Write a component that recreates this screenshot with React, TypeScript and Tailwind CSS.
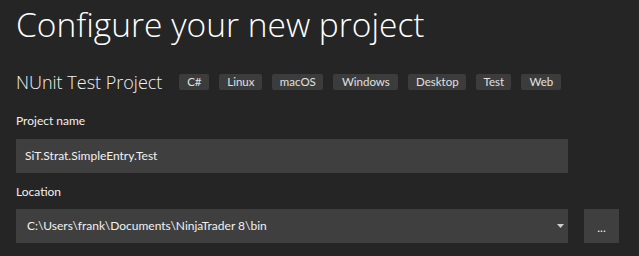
import React from 'react'

const tags = [
  { label: 'C#', width: 'w-[30px]' },
  { label: 'Linux', width: 'w-[43px]' },
  { label: 'macOS', width: 'w-[51px]' },
  { label: 'Windows', width: 'w-[65px]' },
  { label: 'Desktop', width: 'w-[58px]' },
  { label: 'Test', width: 'w-[35px]' },
  { label: 'Web', width: 'w-[40px]' },
]

const App = () => {
  return (
    <div
      className="w-[639px] h-[256px] bg-[#252526] text-[#f1f1f1] pl-[16px] overflow-hidden"
      style={{ fontFamily: 'Lato, "Open Sans", sans-serif' }}
    >
      <h1
        className="pt-[4px] text-[33.5px] leading-[40px] font-light text-white whitespace-nowrap"
        style={{ fontFamily: '"Open Sans", sans-serif' }}
      >
        Configure your new project
      </h1>

      <div className="mt-[26px] h-[24px] flex items-center">
        <span
          className="text-[18px] leading-[24px] font-light text-[#f1f1f1] mr-[17px] whitespace-nowrap"
          style={{ fontFamily: '"Open Sans", sans-serif' }}
        >
          NUnit Test Project
        </span>
        <div className="flex gap-[10px]">
          {tags.map((tag) => (
            <span
              key={tag.label}
              className={`${tag.width} h-[16px] flex items-center justify-center rounded-[2px] bg-[#3c3c3c] text-[11.5px] leading-[16px] text-[#e0e0e0] whitespace-nowrap`}
            >
              {tag.label}
            </span>
          ))}
        </div>
      </div>

      <p className="mt-[19px] text-[12px] leading-[16px] text-[#f1f1f1]">Project name</p>
      <div className="mt-[10px] w-[552px] h-[34px] bg-[#3f3f3f] flex items-center pl-[9px]">
        <span className="text-[12px] leading-[16px] text-[#f1f1f1]">SiT.Strat.SimpleEntry.Test</span>
      </div>

      <p className="mt-[11px] text-[12px] leading-[16px] text-[#f1f1f1]">Location</p>
      <div className="mt-[9px] flex">
        <div className="w-[552px] h-[34px] bg-[#3f3f3f] flex items-center pl-[11px] pr-[4px]">
          <span className="flex-1 text-[12px] leading-[16px] text-[#f1f1f1]">
            C:\Users\frank\Documents\NinjaTrader 8\bin
          </span>
          <svg width="7" height="4" viewBox="0 0 7 4">
            <path d="M0 0h7L3.5 4z" fill="#d0d0d0" />
          </svg>
        </div>
        <button className="ml-[16px] w-[35px] h-[34px] bg-[#3f3f3f] flex items-center justify-center text-[12px] leading-[16px] text-[#f1f1f1] pt-[4px]">
          ...
        </button>
      </div>
    </div>
  )
}

export default App
